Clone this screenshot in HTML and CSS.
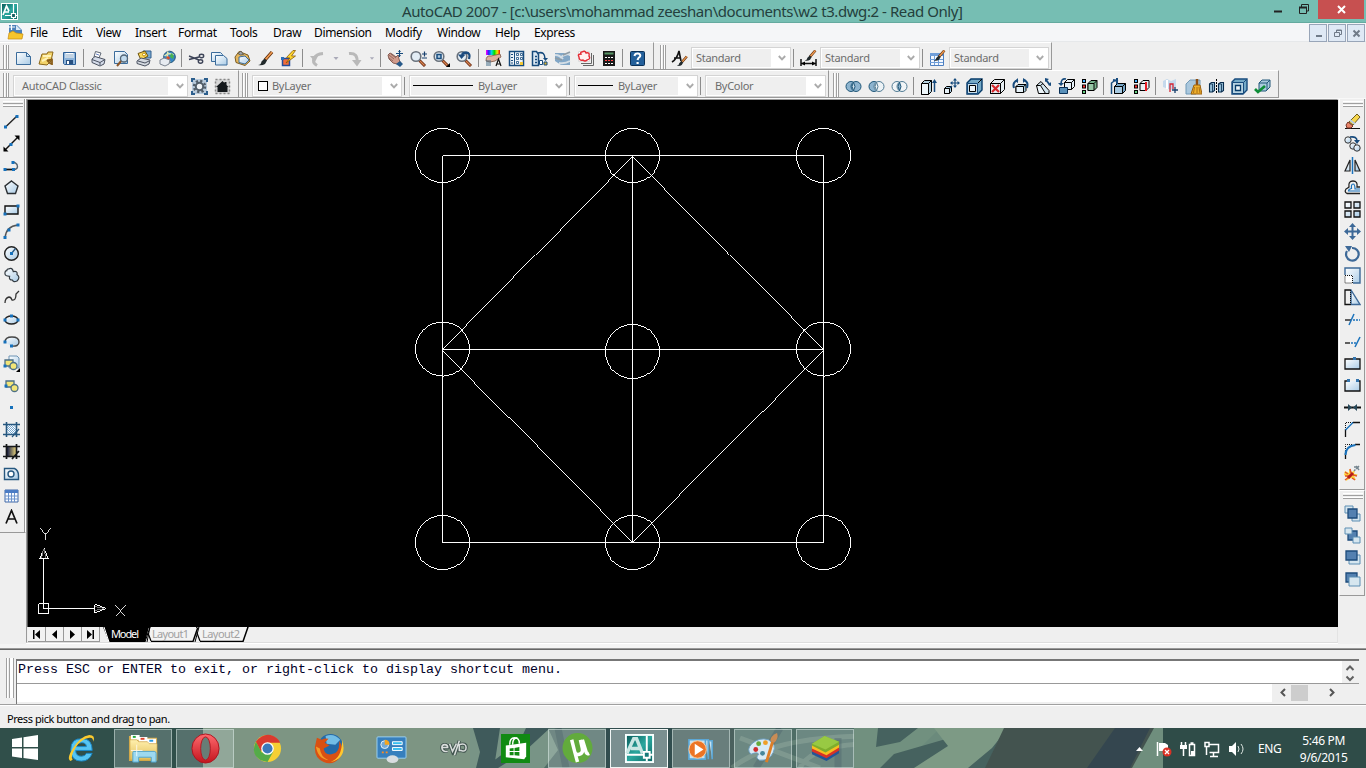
FILE: index.html
```
<!DOCTYPE html>
<html lang="en">
<head>
<meta charset="utf-8">
<title>AutoCAD 2007</title>
<link rel="stylesheet" href="styles.css">
</head>
<body>
<svg class="defs" width="0" height="0">
<defs>
<linearGradient id="sky" x1="0" y1="0" x2="1" y2="1"><stop offset="0" stop-color="#fff"/><stop offset="1" stop-color="#a9cbe6"/></linearGradient>
<linearGradient id="teal" x1="0" y1="0" x2="1" y2="1"><stop offset="0" stop-color="#0c5f5d"/><stop offset=".5" stop-color="#2aa79e"/><stop offset="1" stop-color="#0d6a68"/></linearGradient>
<linearGradient id="gold" x1="0" y1="0" x2="0" y2="1"><stop offset="0" stop-color="#fff0ae"/><stop offset="1" stop-color="#e2bd55"/></linearGradient>
<linearGradient id="red" x1="0" y1="0" x2="0" y2="1"><stop offset="0" stop-color="#ff6a6e"/><stop offset="1" stop-color="#c3141d"/></linearGradient>
<linearGradient id="rainbow"><stop offset="0" stop-color="#f0f"/><stop offset=".2" stop-color="#22f"/><stop offset=".4" stop-color="#0dd"/><stop offset=".6" stop-color="#0d0"/><stop offset=".8" stop-color="#ee0"/><stop offset="1" stop-color="#f00"/></linearGradient>
<linearGradient id="dusk"><stop offset="0" stop-color="#141c44"/><stop offset="1" stop-color="#e6d27c"/></linearGradient>
<symbol id="chev" viewBox="0 0 8 6"><path d="M.8 1 4 4.3 7.200 1" fill="none" stroke="#ababab" stroke-width="1.900"/></symbol>
<symbol id="brush" viewBox="0 0 17 17"><path d="M8 10 15 2" stroke="#5c2a08" stroke-width="3.400"/><path d="M8.500 9.500 15 2" stroke="#f09a50" stroke-width="1.800"/><path d="M1 15q3 0 3.500-3.500L7.500 8.500l2.500 2-2 3.500q-3 2-7 1z" fill="#222a2c"/></symbol>
<symbol id="lens" viewBox="0 0 17 17"><path d="M9.500 10.500 15 16" stroke="#6b2b12" stroke-width="3"/><path d="M10 11l4.500 4.500" stroke="#d9844f" stroke-width="1.200"/><circle cx="6" cy="6.500" r="4.800" fill="#e3edf5" stroke="#69717b" stroke-width="1.600"/></symbol>
<symbol id="frame" viewBox="0 0 17 17"><path d="M3.500 1v15M13.500 1v15M0 3.500h17M0 13.500h17" stroke="#26577f" stroke-width="1.600"/></symbol>
</defs>
</svg>

<header class="title">
<svg class="app" viewBox="0 0 17 17"><path fill="#fff" d="M0 0h17v17H0z"/><path fill="url(#teal)" d="M1 1h15v15H1z"/><path d="M2 12 5.500 3 8 8M3.500 9H8" stroke="#fff" stroke-width="1.700" fill="none"/><path d="M12.500 1v9M12.500 15v1M4 12.500h6M15 12.500h1M10.500 10.500h4v4h-4z" stroke="#fff" fill="#165f61" stroke-width="1.200"/></svg>
<h1>AutoCAD 2007 - [c:\users\mohammad zeeshan\documents\w2 t3.dwg:2 - Read Only]</h1>
<div class="wbtns"><svg width="50" height="20" viewBox="0 0 50 20"><path d="M6 11.500h8" stroke="#222" stroke-width="2"/><path d="M31.500 7.500h7v6h-7zM33.500 7V4.500h7V11H39" stroke="#222" fill="none"/><path d="M31 7.500h8" stroke="#222" stroke-width="2"/></svg><div class="close"><svg width="9" height="9" viewBox="0 0 9 9"><path d="M1 1l7 7M8 1 1 8" stroke="#fff" stroke-width="2"/></svg></div></div>
</header>

<nav class="menubar">
<svg class="doc" viewBox="0 0 17 17"><path d="M2 1h8l5 5v7H2z" fill="#4d82ba"/><path d="M9 1l5 5h-5z" fill="#dceaf6"/><path d="M1 3h7M4.500 0v6" stroke="#fff" stroke-width="1.200"/><path d="M1 15l1-6 4-2 3 2 7 1-1 5z" fill="#f7c52c" stroke="#c78d10" stroke-width=".7"/></svg>
<ul><li>File</li><li>Edit</li><li>View</li><li>Insert</li><li>Format</li><li>Tools</li><li>Draw</li><li>Dimension</li><li>Modify</li><li>Window</li><li>Help</li><li>Express</li></ul>
<div class="mdi">
<span><svg viewBox="0 0 9 9"><path d="M2 7h6" stroke="#707b89" stroke-width="2"/></svg></span>
<span><svg viewBox="0 0 9 9"><path d="M1.500 3.500h5v4h-5zM3.500 3V1h5v4.500H7M3 1.500h6" stroke="#707b89" fill="none"/></svg></span>
<span><svg viewBox="0 0 9 9"><path d="M1.500 1.500l6 6M7.500 1.500l-6 6" stroke="#707b89" stroke-width="2"/></svg></span>
</div>
</nav>

<div class="tbrow">
<div class="tb std"><i class="grip"></i>
<svg class="ic" viewBox="0 0 17 17"><path d="M1.500 2.500h10l4 4v8h-14z" fill="url(#sky)" stroke="#3b6c9c"/><path d="M11.500 2.500v4h4" fill="none" stroke="#3b6c9c"/></svg>
<svg class="ic" viewBox="0 0 17 17"><path d="M1 14 4 4h5l1-2h5l-2 9-4 4z" fill="#f2d36a" stroke="#8b6718"/><path d="M5 6h8M4 11l6-3" stroke="#fff3b8" stroke-width="2"/><path d="M14 15V9.500l-5 1M13 14 9 10" stroke="#8a5d18" stroke-width="1.800" fill="none"/></svg>
<svg class="ic" viewBox="0 0 17 17"><path d="M2.500 2.500h12v12h-11l-1-1z" fill="#8eb4da" stroke="#2e5f96"/><path d="M4.500 3h8v5h-8z" fill="#fff"/><path d="M5 5h7M5 7h7" stroke="#87a7c6"/><path d="M5 10h7v4H5z" fill="#274f7f"/><path d="M6 11h2v3H6z" fill="#fff"/></svg>
<i class="sep"></i>
<svg class="ic" viewBox="0 0 17 17"><path d="M4 7 5.500 1.500 11 3 9 8z" fill="#fff" stroke="#5d6573"/><path d="M6 4l3 1" stroke="#6d86c5"/><path d="M2 9l3-2.500 10 3-1 4.500-4 2-8-3.500z" fill="#d5dcea" stroke="#4a5160"/><path d="M2 9.500l8 3 5-3M10 12.500V15" stroke="#4a5160" fill="none"/></svg>
<svg class="ic" viewBox="0 0 17 17"><path d="M1.500 1.500h10l3 3v9h-13z" fill="url(#sky)" stroke="#3b6c9c"/><path d="M9 10l-5 6" stroke="#8a5528" stroke-width="2"/><circle cx="11" cy="8.500" r="3.500" fill="#c2dbee" stroke="#526475" stroke-width="1.300"/></svg>
<svg class="ic" viewBox="0 0 17 17"><path d="M7 1h8v7H9z" fill="#79a9d2" stroke="#335f8c"/><path d="M2 3.500 9 1l3 5-7 4z" fill="#fbd85a" stroke="#6d5412"/><circle cx="8" cy="4.500" r="1.500" fill="#fff" stroke="#b98a00"/><path d="M1 11l4-3 9 2-1 4-4 2-8-2.500z" fill="#d4d9e0" stroke="#4a5160"/><path d="M2 11l7 2 4-2" stroke="#4a5160" fill="none"/></svg>
<svg class="ic" viewBox="0 0 17 17"><circle cx="10.500" cy="7" r="5.800" fill="#3685c5" stroke="#225275"/><path d="M5.500 6q4-4 9-1M9 1.500q-2 5 2 11" fill="none" stroke="#e0eab4" stroke-width="1.500"/><path d="M12 3q4 2 2 6l-3-2z" fill="#45b251"/><circle cx="9" cy="8" r="1.800" fill="#e24c24"/><path d="M1 10l4-2 6 2-1 4-4 2-5-2z" fill="#e7ebf1" stroke="#7c8491"/></svg>
<i class="sep"></i>
<svg class="ic" viewBox="0 0 17 17"><path d="M1 6l10 4M1 9.500l10-2.500" stroke="#3d4458" stroke-width="1.400"/><ellipse cx="13.500" cy="6" rx="2.200" ry="1.700" fill="none" stroke="#3d4458" stroke-width="1.400"/><ellipse cx="12.500" cy="11.500" rx="2.200" ry="1.700" fill="none" stroke="#3d4458" stroke-width="1.400"/></svg>
<svg class="ic" viewBox="0 0 17 17"><path d="M.500 2.500h9l2 2v7H.500z" fill="url(#sky)" stroke="#3b6c9c"/><path d="M4.500 5.500h8l3.500 3v6.500H4.500z" fill="url(#sky)" stroke="#3b6c9c"/></svg>
<svg class="ic" viewBox="0 0 17 17"><path d="M1 7 5 1.500l9 3.500 2 6-5 4.500-9-3z" fill="#e5b65c" stroke="#7a5b22"/><path d="M4 3.500 7 1l2.500 3.500-3 .5z" fill="#9ca1a8" stroke="#68614d"/><path d="M5 7l6-1 4 4-4 4-6-1.500z" fill="url(#sky)" stroke="#3b6c9c"/></svg>
<svg class="ic" viewBox="0 0 17 17"><use href="#brush"/></svg>
<svg class="ic" viewBox="0 0 17 17"><path d="M2.500 8.500h7v7h-7z" fill="#f16c3c" stroke="#244c9a" stroke-width="1.500"/><path d="M13 .5 6.500 7.500l3.500.5-4 5 9.500-7h-4l4-5.500z" fill="#ffd52e" stroke="#8a5c05" stroke-width=".8"/><path d="M1 7h3v3H1z" fill="#2b6cb8"/></svg>
<i class="sep"></i>
<svg class="ic" viewBox="0 0 17 17"><path d="M8 15.500q-5-3-3-7Q7 4 14 3.500" fill="none" stroke="#b9b9b9" stroke-width="3"/><path d="M1 6l5 6 3-6z" fill="#b9b9b9"/></svg>
<svg class="dd" viewBox="0 0 14 17"><path d="M4.500 7h5L7 10z" fill="#aaaab8"/></svg>
<svg class="ic" viewBox="0 0 17 17"><path d="M3 3.500q9-1 8 9" fill="none" stroke="#b9b9b9" stroke-width="3"/><path d="M6 10l5 6.500 4.500-6.500z" fill="#b9b9b9"/></svg>
<svg class="dd dd2" viewBox="0 0 14 17"><path d="M4.500 7h5L7 10z" fill="#aaaab8"/></svg>
<i class="sep"></i>
<svg class="ic" viewBox="0 0 17 17"><path d="M1 5l2-2 2 1 4 3 2-2 1 4 1 3-3 2-4-1-4-4z" fill="#d19b8c" stroke="#7d5147" stroke-width=".9"/><path d="M2 5l5 4M4 4l5 4M2 8l4 3" stroke="#76534d" stroke-width=".7"/><path d="M9 14l4-3 3 3-3 3z" fill="#275989"/><path d="M12.500 0v7M9 3.500h7" stroke="#174b7d"/><path d="M12.500 0l-1.500 2h3zM12.500 7 11 5h3z" fill="#174b7d"/></svg>
<svg class="ic" viewBox="0 0 17 17"><use href="#lens"/><path d="M12 4h5M14.500 1.500v5M12 8h5" stroke="#173f6d" stroke-width="1.200"/></svg>
<svg class="ic" viewBox="0 0 17 17"><use href="#lens"/><path d="M4 4.500h4v4H4z" fill="#adc8de" stroke="#174b7d" stroke-width="1.500"/><path d="M17 13v4h-4z"/></svg>
<svg class="ic" viewBox="0 0 17 17"><use href="#lens"/><path d="M13 9Q15 3 10 2.500 7 2.500 6 5" stroke="#1c4b7e" stroke-width="2.300" fill="none"/><path d="M2 4.500h7.500L5.500 9z" fill="#1c4b7e"/></svg>
<i class="sep"></i>
<svg class="ic" viewBox="0 0 17 17"><path d="M1 0h14v5H1z" fill="url(#rainbow)"/><path d="M1 11q0-6 5-5l9-2 1 3-6 4-5 1z" fill="#dfb09d" stroke="#785443" stroke-width=".8"/><path d="M1 11h5M1 13h5M1 15h5" stroke="#416a87"/><path d="M11 16l2.500-7L16 16M12 14h3" stroke="#111" stroke-width="1.200" fill="none"/></svg>
<svg class="ic" viewBox="0 0 17 17"><path d="M1.500 1.500h14v14h-14z" fill="#edf3f9" stroke="#174b7d" stroke-width="1.500"/><path d="M6.500 1v15" stroke="#174b7d"/><path d="M3 4.500h2M3 7.500h2M3 10.500h2M3 13h2" stroke="#174b7d"/><path d="M8.500 3.500h2v2h-2zM12.500 3.500h2v2h-2zM8.500 7.500h2v2h-2zM12.500 7.500h2v2h-2zM8.500 11.500h2v2h-2z" fill="#fff" stroke="#174b7d" stroke-width=".8"/><path d="M12 12h3v3h-3z" fill="#f3c735"/></svg>
<svg class="ic" viewBox="0 0 17 17"><path d="M1.500 1.500h4l2 3v11h-6z" fill="#dce9f4" stroke="#174b7d" stroke-width="1.500"/><path d="M4 6.500h2M4 9.500h2M4 12.500h2" stroke="#174b7d" stroke-width="1.500"/><path d="M8.500 10.500h3v4h-3z" fill="#fff" stroke="#174b7d"/><path d="M7 3q7-2 7 6" stroke="#174b7d" stroke-width="1.600" fill="none"/><path d="M12 8h5l-2.500 3z" fill="#174b7d"/><path d="M13 12h3v3h-3z" fill="#ddb430" stroke="#174b7d"/></svg>
<svg class="ic" viewBox="0 0 17 17"><path d="M1 3h9l6 3v9H7L1 11z" fill="#81a6c6"/><path d="M1 5q5 0 8 4M6 8q4-4 10-4M5 13q6 1 11-2" stroke="#d5dee5" stroke-width="1.800" fill="none"/><path d="M9 5l7-3M1 8l7 2" stroke="#8e9ba4" stroke-width="1.500"/></svg>
<svg class="ic" viewBox="0 0 17 17"><path d="M6 15.500h10.500V5M4 13.500h10.500V3" fill="none" stroke="#666"/><path d="M1.500 1.500h11v10h-11z" fill="#fff" stroke="#ddd"/><path d="M5 2q3-2 4 1 4-1 3 3 2 3-2 4-2 2-4 0-4 1-4-3-2-3 2-3-1-2 1-2z" fill="#fff0f0" stroke="#e52b35" stroke-width="1.400"/></svg>
<svg class="ic" viewBox="0 0 17 17"><path d="M3 1h12v15H3z" fill="#191919"/><path d="M4.500 2.500h9v2h-9z" fill="#579564"/><path d="M5 7h2v1H5zm3 0h2v1H8zm3 0h2v1h-2zM5 13h2v1H5zm3 0h2v1H8zm3 0h2v1h-2z" fill="#fff"/><path d="M5 10h2v1H5zm3 0h2v1H8zm3 0h2v1h-2z" fill="#f44"/></svg>
<i class="sep"></i>
<svg class="ic" viewBox="0 0 17 17"><rect x="1.500" y="1.500" width="14" height="14" rx="1" fill="#24609b" stroke="#0b3158"/><path d="M5.500 6q.5-3 3.500-2.500 3 .5 2 3-2 1.500-2.500 3.500" fill="none" stroke="#fff" stroke-width="2.100"/><path d="M7.500 12h2.200v2H7.500z" fill="#fff"/></svg>
</div>
<div class="tb styles"><i class="grip"></i>
<svg class="ic" viewBox="0 0 17 17"><path d="M1 12Q6 9 8 1l2 10M3 8h7" stroke="#111" stroke-width="1.600" fill="none"/><g transform="translate(5 5) scale(.72)"><use href="#brush" width="17" height="17"/></g></svg>
<div class="combo w100"><span>Standard</span><svg><use href="#chev"/></svg></div><i class="sep"></i>
<svg class="ic" viewBox="0 0 17 17"><path d="M1 9v7M16 9v7M1 13.500h15" stroke="#111" stroke-width="1.500"/><path d="M1 13.500l4-2v4zM16 13.500l-4-2v4z"/><g transform="translate(4 -1) scale(.76)"><use href="#brush" width="17" height="17"/></g></svg>
<div class="combo w100"><span>Standard</span><svg><use href="#chev"/></svg></div><i class="sep"></i>
<svg class="ic" viewBox="0 0 17 17"><path d="M1.500 3.500h13v12h-13z" fill="#f3f8ff" stroke="#4c7ec0"/><path d="M1 3h13v3H1z" fill="#6f9ed9"/><path d="M5.500 4v11M9.500 4v11M1 9.500h13M1 12.500h13" stroke="#6f9ed9"/><g transform="translate(4 -1) scale(.76)"><use href="#brush" width="17" height="17"/></g></svg>
<div class="combo w100"><span>Standard</span><svg><use href="#chev"/></svg></div>
</div>
</div>

<div class="tbrow second">
<div class="tb wsp"><i class="grip"></i>
<div class="combo w175"><span>AutoCAD Classic</span><svg><use href="#chev"/></svg></div>
<svg class="ic" viewBox="0 0 17 17"><path d="M1 1h15v15H1z" fill="#b9cbdc"/><path d="M1 4V1h3M13 1h3v3M16 13v3h-3M4 16H1v-3" fill="none" stroke="#2d5f8d" stroke-width="2"/><circle cx="8.500" cy="8.500" r="5.500" fill="none" stroke="#525e69" stroke-width="2.500" stroke-dasharray="2.200 2.120"/><circle cx="8.500" cy="8.500" r="3.700" fill="#eef2f5" stroke="#525e69" stroke-width="2"/></svg>
<svg class="ic" viewBox="0 0 17 17"><path d="M1 1h15v15H1z" fill="#d8d8d8"/><path d="M1.500 1.500h14v14h-14z" fill="none" stroke="#888" stroke-width="1.500" stroke-dasharray="2 2"/><path d="M2 9 8.500 3l2 2V4h2v3l2 2h-1v5h-10V9z" fill="#15191c"/></svg>
</div>
<div class="tb props"><i class="grip"></i>
<div class="combo w150"><b class="swatch"></b><span>ByLayer</span><svg><use href="#chev"/></svg></div><i class="sep"></i>
<div class="combo w158"><b class="ln l60"></b><span>ByLayer</span><svg><use href="#chev"/></svg></div><i class="sep"></i>
<div class="combo w124"><b class="ln l35"></b><span>ByLayer</span><svg><use href="#chev"/></svg></div><i class="sep"></i>
<div class="combo w120"><span class="ind">ByColor</span><svg><use href="#chev"/></svg></div>
</div>
<div class="tb model"><i class="grip"></i>
<svg class="ic" viewBox="0 0 17 17"><circle cx="6" cy="8.500" r="5" fill="#8db4cf" stroke="#205779"/><circle cx="11" cy="8.500" r="5" fill="#8db4cf" stroke="#205779"/><path d="M8.500 4.200q-3 4 0 8.600 3-4 0-8.600z" fill="#cde0ec" stroke="#205779"/></svg>
<svg class="ic" viewBox="0 0 17 17"><circle cx="6" cy="8.500" r="5" fill="#8db4cf" stroke="#205779"/><circle cx="11" cy="8.500" r="5" fill="#edf3f6" stroke="#517b94"/><path d="M8.500 4.200q-3 4 0 8.600 3-4 0-8.600z" fill="#edf3f6" stroke="#517b94"/></svg>
<svg class="ic" viewBox="0 0 17 17"><circle cx="6" cy="8.500" r="5" fill="#f1f5f7" stroke="#517b94"/><circle cx="11" cy="8.500" r="5" fill="#f1f5f7" stroke="#517b94"/><path d="M8.500 4.200q-3 4 0 8.600 3-4 0-8.600z" fill="#8db4cf" stroke="#205779"/></svg>
<i class="sep"></i>
<svg class="ic" viewBox="0 0 17 17"><path d="M1.500 5.500l3-3h7v11l-3 3h-7z" fill="#b5d3e2" stroke="#000"/><path d="M1.500 5.500h7v11h-7zM8.500 5.500l3-3" fill="#edf6fa" stroke="#000"/><path d="M14.500 4v10" stroke="#174b7d" stroke-width="1.500"/><path d="M12 5l2.500-4L17 5z" fill="#174b7d"/></svg>
<svg class="ic" viewBox="0 0 17 17"><path d="M1.500 10.500l2-2h5v5l-2 2h-5z" fill="#a9cbe0" stroke="#000"/><path d="M1.500 10.500h5v5h-5zM6.500 10.500l2-2" fill="#e6f1f8" stroke="#000"/><path d="M12 1v8M8 5h8M7 10l2-2" stroke="#174b7d" stroke-width="1.200"/><path d="M12 0l-2 2.500h4zM12 10l-2-2.500h4zM7 5l2.500-2v4zM17 5l-2.500-2v4z" fill="#174b7d"/></svg>
<svg class="ic" viewBox="0 0 17 17"><path d="M1 5l4-4h11v11l-4 4H1z" fill="#75aac7" stroke="#063b69" stroke-width="1.400"/><path d="M1.500 5.500h10v10h-10z" fill="#c9dfeb" stroke="#174b7d"/><path d="M3.500 7.500h6v6h-6z" fill="#e9f4fa" stroke="#000"/><path d="M12 5l4-4" stroke="#000"/></svg>
<svg class="ic" viewBox="0 0 17 17"><path d="M1.500 5.500l4-4h10v10l-4 4h-10z" fill="#e6eef2" stroke="#000"/><path d="M1.500 5.500h10v10h-10zM11.500 5.500l4-4" fill="none" stroke="#000"/><path d="M3 7l7 7M10 7l-7 7" stroke="#d5262b" stroke-width="2.200"/></svg>
<svg class="ic" viewBox="0 0 17 17"><path d="M4 8.500l2-2h8v6l-2 2H4z" fill="#a9cbe0" stroke="#000"/><path d="M4 8.500h7.500v6H4zM11.500 8.500l2.500-2" fill="#e6f1f8" stroke="#000"/><path d="M6 2Q0 4 2 10M11 2q6 1 4 8" fill="none" stroke="#174b7d" stroke-width="2"/><path d="M6 0v5L3 3zM11 0v5l3-3z" fill="#174b7d"/></svg>
<svg class="ic" viewBox="0 0 17 17"><path d="M1.500 7.500 6 3.500l8 9v3H7z" fill="#d2e4ee" stroke="#000"/><path d="M1.500 7.500h4l5 8h-7zM5.500 7.500 8 5.500" fill="#edf5f9" stroke="#000"/><path d="M11 2l4 5" stroke="#174b7d" stroke-width="2"/><path d="M10 4V0l4 1zM16 8V4l-3 3z" fill="#174b7d"/></svg>
<svg class="ic" viewBox="0 0 17 17"><path d="M6.500 4.500l3-3h7v7l-3 3h-7z" fill="#e6f1f8" stroke="#000"/><path d="M6.500 4.500h7v7M13.500 4.500l3-3" fill="none" stroke="#000"/><path d="M1.500 9.500h8v6h-8z" fill="#5990b9" stroke="#082f56"/><path d="M8 1Q3 0 3 6" stroke="#174b7d" stroke-width="1.600" fill="none"/><path d="M0 5h6L3 8z" fill="#174b7d"/></svg>
<svg class="ic" viewBox="0 0 17 17"><path d="M1 1h4v4H1zM1 6.500h4v4H1zM1 12h4v4H1z"/><path d="M2 2h2v2H2z" fill="#46b0ff"/><path d="M2 7.500h2v2H2z" fill="#f33"/><path d="M2 13h2v2H2z" fill="#62cf80"/><path d="M7 5.500l3-3h6v7l-3 3H7z" fill="#76b18b" stroke="#000"/><path d="M7 5.500h6v7H7zM13 5.500l3-3" fill="#97c7a6" stroke="#000"/></svg>
<i class="sep"></i>
<svg class="ic" viewBox="0 0 17 17"><path d="M4.500 8.500l3-3h8v7l-3 3h-8z" fill="#75a5c6" stroke="#000"/><path d="M4.500 8.500h8v7h-8zM12.500 8.500l3-3" fill="#a8cae1" stroke="#000"/><path d="M1.500 16V5l4-3" fill="none" stroke="#174b7d" stroke-width="1.500"/><path d="M7 0v6M3 2l5 1" stroke="#174b7d" stroke-width="2"/></svg>
<svg class="ic" viewBox="0 0 17 17"><path d="M1 1h4v4H1zM1 6.500h4v4H1zM1 12h4v4H1z"/><path d="M2 2h2v2H2z" fill="#46b0ff"/><path d="M2 7.500h2v2H2z" fill="#f33"/><path d="M2 13h2v2H2z" fill="#62cf80"/><path d="M7 5.500l3-3h6v7l-3 3H7z" fill="#e8f1f5" stroke="#000"/><path d="M7 5.500h6v7" fill="none" stroke="#000"/><path d="M13 4v9" stroke="#e81b24" stroke-width="2"/></svg>
<i class="sep"></i>
<svg class="ic" viewBox="0 0 17 17"><path d="M1 3l4-2 4 2 5-2v8l-5 3-8-3z" fill="#c5d9ec"/><path d="M5 2v9" stroke="#fff" stroke-width="2"/><path d="M8 14V6h3v5" stroke="#d42533" stroke-width="1.300" fill="none"/><path d="M10 12h6M13 9v6" stroke="#173f6d" stroke-width="1.300"/></svg>
<svg class="ic" viewBox="0 0 17 17"><path d="M1 6l4-4h10v10l-4 4H1z" fill="#a9c7dd" stroke="#719ab8"/><path d="M12 1v6" stroke="#8c4d13" stroke-width="2.500"/><path d="M9 7h6l2 9H6z" fill="#efb02c" stroke="#9b6110"/><path d="M9.500 9l-1 6M12 9v6M14 9l1 6" stroke="#9b6110" stroke-width=".8"/></svg>
<svg class="ic" viewBox="0 0 17 17"><path d="M1.500 6l2-1.500h3v8l-2 1.500h-3zM10.500 6l2-1.500h3v8l-2 1.500h-3z" fill="#94bdd7" stroke="#082c4d" stroke-width="1.100"/><path d="M1.500 6h3v8M10.500 6h3v8" fill="none" stroke="#082c4d" stroke-width=".8"/><path d="M8.500 1v15" stroke="#000" stroke-dasharray="2 1"/></svg>
<svg class="ic" viewBox="0 0 17 17"><path d="M1 4l3-3h12v11l-4 4H1z" fill="#75aac7" stroke="#174b7d" stroke-width="1.400"/><path d="M1.500 4.500h11v11h-11zM12.500 4.500l3-3" fill="#b7d3e2" stroke="#174b7d"/><path d="M4.500 7.500h5v5h-5z" fill="#edf6fa" stroke="#063b69" stroke-width="1.300"/></svg>
<svg class="ic" viewBox="0 0 17 17"><path d="M5 5l3-3h8v7l-4 4H5z" fill="#a9cbdd" stroke="#205779"/><path d="M5 5h8v7M13 5l3-3" fill="none" stroke="#205779"/><path d="M1 11l3 3 7-6" fill="none" stroke="#0e8d38" stroke-width="2.700"/></svg>
</div>
</div>

<main class="work">
<aside class="side left"><i class="hgrip"></i>
<svg class="ic" viewBox="0 0 17 17"><path d="M2.500 14 14 3" stroke="#222" stroke-width="1.400"/><path d="M1 12.500h3v3H1zM12.500 2h3v3h-3z" fill="#1671bb"/></svg>
<svg class="ic" viewBox="0 0 17 17"><path d="M2 15 15 2" stroke="#111" stroke-width="1.500"/><path d="M.5 16.500v-5l5 5zM16.500.5v5l-5-5z"/><path d="M6.500 8h3v3h-3z" fill="#1671bb"/></svg>
<svg class="ic" viewBox="0 0 17 17"><path d="M2 12.500h8q6 0 4-5-2-3-5-2" fill="none" stroke="#53616c" stroke-width="1.400"/><path d="M2 12.500h8" stroke="#111" stroke-width="1.500"/><path d="M.5 11h3v3h-3zM9 11h3v3H9zM8.500 4h3v3h-3z" fill="#1671bb"/></svg>
<svg class="ic" viewBox="0 0 17 17"><path d="M8.500 2 15 7l-2.500 7.500h-8L2 7z" fill="url(#sky)" stroke="#2b2f33" stroke-width="1.400"/></svg>
<svg class="ic" viewBox="0 0 17 17"><path d="M2 5h13v8H2z" fill="url(#sky)" stroke="#111" stroke-width="1.400"/><path d="M.5 11.500h3v3h-3zM13.500 3.500h3v3h-3z" fill="#1671bb"/></svg>
<svg class="ic" viewBox="0 0 17 17"><path d="M2 15Q3 3 15 2" fill="none" stroke="#555" stroke-width="1.400"/><path d="M.5 13h3v3h-3zM4.500 5.500h3v3h-3zM13.500.5h3v3h-3z" fill="#1671bb"/></svg>
<svg class="ic" viewBox="0 0 17 17"><circle cx="8.500" cy="8.500" r="6.800" fill="url(#sky)" stroke="#222" stroke-width="1.400"/><path d="M8.500 8.500l4-5" stroke="#26577f" stroke-width="1.300"/><path d="M7 7h3v3H7z" fill="#1671bb"/></svg>
<svg class="ic" viewBox="0 0 17 17"><path d="M5 2q4-2 5 3 5-1 4 3 4 3 0 7-4 2-5-1-4 0-3-4-5 0-5-3 0-3 2-3 0-2 2-2z" transform="translate(1 0) scale(.93)" fill="url(#sky)" stroke="#333b42" stroke-width="1.300"/></svg>
<svg class="ic" viewBox="0 0 17 17"><path d="M2 14q0-5 4-6 2 0 3 3 4 1 4-6l3-3" fill="none" stroke="#333" stroke-width="1.300"/></svg>
<svg class="ic" viewBox="0 0 17 17"><ellipse cx="8.500" cy="9" rx="6.500" ry="4" fill="url(#sky)" stroke="#222" stroke-width="1.400"/><path d="M.5 7.500h3v3h-3zM13.500 7.500h3v3h-3zM7 3.500h3v3H7z" fill="#1671bb"/></svg>
<svg class="ic" viewBox="0 0 17 17"><path d="M2 9q0-5 7-5t7 5-8 4" fill="url(#sky)" stroke="#444" stroke-width="1.400"/><path d="M.5 7.500h3v3h-3zM7 11.500h3v3H7z" fill="#1671bb"/></svg>
<svg class="ic" viewBox="0 0 17 17"><path d="M6 1h8l2 2v10H6z" fill="url(#sky)" stroke="#6d93b4"/><path d="M2 5h8v6H2z" fill="#f2e577" stroke="#4c6f85" stroke-width="1.300"/><circle cx="10.500" cy="11" r="3.500" fill="#f2e577" stroke="#4c6f85" stroke-width="1.300"/><path d="M.5 9.500h3v3h-3z" fill="#1671bb"/><path d="M17 13v4h-4z"/></svg>
<svg class="ic" viewBox="0 0 17 17"><path d="M3 4h8v6H3z" fill="#f2e577" stroke="#4c6f85" stroke-width="1.300"/><circle cx="11.500" cy="11" r="3.500" fill="#f2e577" stroke="#4c6f85" stroke-width="1.300"/><path d="M1.500 7.500h3v3h-3z" fill="#1671bb"/></svg>
<svg class="ic" viewBox="0 0 17 17"><path d="M7 7h3v3H7z" fill="#1671bb"/></svg>
<svg class="ic" viewBox="0 0 17 17"><path d="M4 4h9v9H4z" fill="#fff"/><path d="M4 4l9 9M4 8l5 5M8 4l5 5M4 10.500 6.500 13M10.500 4 13 6.500M4 6l7 7M6 4l7 7" stroke="#3d84be" stroke-width=".7"/><use href="#frame"/><path d="M9 16l7-8" stroke="#26577f" stroke-width="1.200"/></svg>
<svg class="ic" viewBox="0 0 17 17"><path d="M4 4h9v9H4z" fill="url(#dusk)"/><path d="M3.500 1v15M13.500 1v15M0 3.500h17M0 13.500h17M9 16l7-8" stroke="#151719" stroke-width="1.700"/></svg>
<svg class="ic" viewBox="0 0 17 17"><path d="M1.500 3.500h10q4 2 4 7v4h-14z" fill="url(#sky)" stroke="#26577f" stroke-width="1.400"/><circle cx="8" cy="9" r="3" fill="#fff" stroke="#26577f" stroke-width="1.400"/></svg>
<svg class="ic" viewBox="0 0 17 17"><path d="M2 3h13v12H2z" fill="#f8fbff" stroke="#4169a7"/><path d="M2 3h13v3H2z" fill="#4b7cc5"/><path d="M5.500 6v9M8.500 6v9M11.500 6v9M2 9h13M2 12h13" stroke="#6b92cc"/></svg>
<svg class="ic" viewBox="0 0 17 17"><path d="M3 14.500 8.500 1.500 14 14.500M5 10h7" fill="none" stroke="#111" stroke-width="1.700"/></svg>
</aside>

<section class="view">
<svg class="canvas" viewBox="28 100 1310 527" shape-rendering="crispEdges">
<g fill="none" stroke="#fff" stroke-width=".99">
<path d="M442.500 155.500h381v387h-381zM632.500 155v387M442 349.500h381"/>
<path d="M632.500 155.500l191 194-191 193-190-193z"/>
<circle cx="442.500" cy="155.500" r="27"/><circle cx="632.500" cy="155.500" r="27"/><circle cx="823.500" cy="155.500" r="27"/>
<circle cx="442.500" cy="349" r="27"/><circle cx="632.500" cy="351.500" r="27"/><circle cx="823.500" cy="349" r="27"/>
<circle cx="442.500" cy="542.500" r="27"/><circle cx="632.500" cy="542.500" r="27"/><circle cx="823.500" cy="542.500" r="27"/>
<path d="M38.500 603.500h10v10h-10zM43.500 609V558M43 608.500h52M39.500 558.500h9l-4.500-11zM94.500 604.500v8l11-4z"/>
<path d="M41.500 558l2-9M45.500 558l-1-9M95 606.500l9 2M95 610.500l9-2" stroke="#777"/>
<path d="M40.500 527.500l5 6 5-6M45.500 533v7M115.500 604.500l10 11M125.500 604.500l-10 11" stroke="#ddd"/>
</g>
</svg>
<div class="tabs">
<span class="nb"><svg viewBox="0 0 9 9"><path d="M1 0h1.500v9H1zM8 0v9L3 4.500z"/></svg></span>
<span class="nb"><svg viewBox="0 0 9 9"><path d="M7 0v9L2 4.500z"/></svg></span>
<span class="nb"><svg viewBox="0 0 9 9"><path d="M2 0v9l5-4.500z"/></svg></span>
<span class="nb"><svg viewBox="0 0 9 9"><path d="M1 0v9l5-4.500zM6.500 0H8v9H6.500z"/></svg></span>
<svg class="tabset" viewBox="100 627 150 15"><path d="M196 627h52l-5 14.500h-43" fill="#f3f3f3" stroke="#000" stroke-width="1.500"/><path d="M147 627h51l-5 14.500h-42" fill="#f3f3f3" stroke="#000" stroke-width="1.500"/><path d="M197 626.500h50M150 626.500h46" stroke="#f3f3f3" stroke-width="3"/><path d="M145 627h5l-3 15M196 627h3l-4 15M145 642l5-15" stroke="#000" fill="none"/><path d="M103 627h46l-4 15h-36z"/><path d="M104 627l5 15" stroke="#fff" fill="none"/><path d="M148 633l3 8M197 633l3 8" stroke="#000" stroke-width="1.200"/><text x="111" y="638" textLength="28">Model</text><text x="152" y="638" textLength="37">Layout1</text><text x="202" y="638" textLength="38">Layout2</text></svg>
</div>
</section>

<aside class="rightcol">
<div class="side right"><i class="hgrip"></i>
<svg class="ic" viewBox="0 0 17 17"><path d="M1 15.500h15" stroke="#111"/><path d="M5 9 13 1l3 3-7 8z" fill="#f6d64c" stroke="#6e5b1d"/><path d="M4 9l5 4-2 2H3l-1-3z" fill="#e98368" stroke="#743325"/><path d="M6 7l5 4" stroke="#b8cfe0" stroke-width="2"/></svg>
<svg class="ic" viewBox="0 0 17 17"><circle cx="4" cy="5" r="3.200" fill="url(#sky)" stroke="#333"/><circle cx="9" cy="11" r="3.200" fill="url(#sky)" stroke="#333"/><circle cx="13" cy="13" r="3.200" fill="url(#sky)" stroke="#333"/><path d="M6 2q7-1 7 4" fill="none" stroke="#174b7d" stroke-width="1.600"/><path d="M10 5h6l-3 4z" fill="#174b7d"/></svg>
<svg class="ic" viewBox="0 0 17 17"><path d="M6 3v11H1zM11 3v11h5z" fill="url(#sky)" stroke="#222" stroke-width="1.200"/><path d="M8.500 0v17" stroke="#1b73bc" stroke-width="1.500"/></svg>
<svg class="ic" viewBox="0 0 17 17"><path d="M16 14.500H3Q0 13 2 10q2-1 3-2Q4 2 9 2t4 6h3" fill="none" stroke="#222" stroke-width="1.300"/><path d="M16 12H4.500q0-2 3-2.500Q7 5 9 5t2 5h5" fill="none" stroke="#1b73bc" stroke-width="1.200"/></svg>
<svg class="ic" viewBox="0 0 17 17"><path d="M1 1h6v6H1zM10 1h6v6h-6zM1 10h6v6H1zM10 10h6v6h-6z" fill="url(#sky)" stroke="#111" stroke-width="1.300"/></svg>
<svg class="ic" viewBox="0 0 17 17"><path d="M8.500 2v13M2 8.500h13" stroke="#3d6998" stroke-width="2"/><path d="M8.500 0 5 4h7zM8.500 17 5 13h7zM0 8.500 4 5v7zM17 8.500 13 5v7z" fill="#3d6998"/></svg>
<svg class="ic" viewBox="0 0 17 17"><path d="M8 3a6.300 6.300 0 1 1-5 3" fill="none" stroke="#3d6998" stroke-width="2.200"/><path d="M1 1h7l-3 6z" fill="#3d6998"/></svg>
<svg class="ic" viewBox="0 0 17 17"><path d="M1 1h15v15H1z" fill="url(#sky)"/><path d="M1 8V1h15v15H9" fill="none" stroke="#3d6998" stroke-width="1.400"/><path d="M1 8.500h7.500V16H1z" fill="#fff" stroke="#111" stroke-dasharray="1 1"/></svg>
<svg class="ic" viewBox="0 0 17 17"><path d="M7 1l9 14.500H7z" fill="url(#sky)" stroke="#3d6998" stroke-width="1.400"/><path d="M6.500 1H1v14.500h5.500" fill="none" stroke="#111" stroke-width="1.300"/><path d="M6.500 1v15" stroke="#111" stroke-dasharray="1 1"/></svg>
<svg class="ic" viewBox="0 0 17 17"><path d="M1 9h6" stroke="#111" stroke-width="1.300"/><path d="M9 9h7" stroke="#1b73bc" stroke-width="1.300" stroke-dasharray="2 1"/><path d="M5 14l5-11" stroke="#1b73bc" stroke-width="1.500"/></svg>
<svg class="ic" viewBox="0 0 17 17"><path d="M1 10h5" stroke="#111" stroke-width="1.300"/><path d="M7 10h6" stroke="#1b73bc" stroke-width="1.300" stroke-dasharray="2 1"/><path d="M11 14l5-10" stroke="#1b73bc" stroke-width="1.500"/></svg>
<svg class="ic" viewBox="0 0 17 17"><path d="M1 4h15v10H1z" fill="url(#sky)" stroke="#111" stroke-width="1.300"/><path d="M9 2h3v3H9z" fill="#3475ae"/></svg>
<svg class="ic" viewBox="0 0 17 17"><path d="M1 4h15v10H1z" fill="url(#sky)"/><path d="M3 4H1v10h15V4h-2" fill="none" stroke="#111" stroke-width="1.300"/><path d="M3 2h3v3H3zM12 2h3v3h-3z" fill="#3475ae"/></svg>
<svg class="ic" viewBox="0 0 17 17"><path d="M0 8.500h17" stroke="#111" stroke-width="2"/><path d="M4 5l4 3.500L4 12zM13 5 9 8.500l4 3.500z" fill="#264758"/></svg>
<svg class="ic" viewBox="0 0 17 17"><path d="M1.500 16V8M9 1.500h7" stroke="#111" stroke-width="1.300"/><path d="M1.500 7V1.500H9" fill="none" stroke="#111" stroke-dasharray="1 1"/><path d="M1.500 9 9 1.500" stroke="#1b73bc" stroke-width="1.500"/></svg>
<svg class="ic" viewBox="0 0 17 17"><path d="M1.500 16v-6M11 1.500h5" stroke="#111" stroke-width="1.300"/><path d="M1.500 8V1.500H9" fill="none" stroke="#111" stroke-dasharray="1 1"/><path d="M1.500 12q0-9 10-10" fill="none" stroke="#1b73bc" stroke-width="2"/></svg>
<svg class="ic" viewBox="0 0 17 17"><path d="M1 6l4 2V4l3 3 3-2-1 4h4l-4 2 2 4-5-2-5 3 1-4-3-2z" fill="#ffd33b"/><path d="M1 7l3 2M6 4l1 4M1 15l4-3M8 13l3 2M1 11l4 0M9 10l4 1" stroke="#e0572b" stroke-width="1.500"/><path d="M4 13 9 8" stroke="#b51c1c" stroke-width="3"/><path d="M10 6l5-5M10 2h6M15 5l-3-4" stroke="#75858f" stroke-width="1.500" stroke-dasharray="2 1"/></svg>
</div>
<div class="side right order"><i class="hgrip"></i>
<svg class="ic" viewBox="0 0 17 17"><path d="M1 1h8v7H1zM8 9h8v7H8z" fill="#d6e6ef" stroke="#5c8eb3"/><path d="M4 4h9v9H4z" fill="#5380b0" stroke="#1d4b7b" stroke-width="1.300"/></svg>
<svg class="ic" viewBox="0 0 17 17"><path d="M4 4h9v9H4z" fill="#5380b0" stroke="#1d4b7b" stroke-width="1.300"/><path d="M1 1h7v6H1zM9 10h7v6H9z" fill="#d6e6ef" stroke="#5c8eb3"/></svg>
<svg class="ic" viewBox="0 0 17 17"><path d="M5 6h11v9H5z" fill="#d6e6ef" stroke="#5c8eb3"/><path d="M2 2h11v9H2z" fill="#5380b0" stroke="#1d4b7b" stroke-width="1.300"/></svg>
<svg class="ic" viewBox="0 0 17 17"><path d="M2 2h11v9H2z" fill="#5380b0" stroke="#1d4b7b" stroke-width="1.300"/><path d="M5 6h11v9H5z" fill="#d6e6ef" stroke="#5c8eb3"/></svg>
</div>
</aside>
</main>

<section class="cmd">
<i class="grip"></i>
<div class="cmdbox">
<div class="hist"><p>Press ESC or ENTER to exit, or right-click to display shortcut menu.</p><div class="vs"><svg viewBox="0 0 16 22"><path d="M4.500 9 8 5.500 11.500 9M4.500 15.500 8 19l3.500-3.500" fill="none" stroke="#606060" stroke-width="2"/></svg></div></div>
<div class="inp"><div class="field"></div><div class="hs"><svg viewBox="0 0 69 18"><path d="M19 1h17v16H19z" fill="#cdcdcd"/><path d="M13 5 9.500 8.500 13 12M58 5l3.500 3.500L58 12" fill="none" stroke="#555" stroke-width="2"/></svg></div></div>
</div>
</section>

<div class="status">Press pick button and drag to pan.</div>

<footer class="taskbar">
<svg class="wall" viewBox="0 0 1366 40" preserveAspectRatio="none">
<path fill="#6b8a7c" d="M0 0h1366v40H0z"/>
<path fill="#304f4a" d="M0 0h203v40H0z"/><path fill="#7d9583" d="M203 0h290v40H203z"/><path fill="#789486" d="M470 0h400v40H470z"/>
<path fill="#3f5a5b" d="M473 0h27l-6 40h-18l4-16zM526 0h24l-26 24-26 16h-14l36-27z"/><path fill="#526e68" d="M548 0h60v40h-64l14-18z"/><path fill="#314d4e" d="M606 0h66v40h-66z"/><path fill="#4a615e" d="M672 0h62v40h-62z"/><path fill="#4e6d66" d="M734 0h140v40H734z"/>
<path d="M732 40q40-32 140-32M740 10l80 30M800 40q12-24 70-24" stroke="#86a391" stroke-width="5" fill="none" opacity=".4"/><path d="M558 0l8 40M780 0l-24 40M838 10v30" stroke="#263f48" stroke-width="7" fill="none" opacity=".4"/>
<path fill="#71907f" d="M854 0h86l-40 40h-46z"/><path fill="#46625f" d="M878 0h40l-18 14-24 5zM894 26l90-26h20l-18 40H880z"/><path fill="#7d9a85" d="M934 0h74l-16 20-24 20h-54l34-22z"/><path fill="#43534f" d="M1004 0h151l-22 40H985z"/><path fill="#34464f" d="M1115 0h35l-20 40h-43z"/><path fill="#6f8e7d" d="M1154 0h9v40h-31z"/><path fill="#2f4c48" d="M1163 0h203v40h-203z"/>
</svg>
<div class="start"><svg width="28" height="26" viewBox="0 0 28 26"><path fill="#fff" d="M1 4l10-1.500V12H1zM12.500 2.300 27 0v12H12.500zM1 13.500h10V23L1 21.500zM12.500 13.500H27V25l-14.500-2z"/></svg></div>
<div class="apps">
<span><svg viewBox="0 0 32 32"><path d="M27 18H10q0 6 6 6 4 0 5-3h6q-3 8-11 8Q5 29 5 17T17 6q10 0 10 12zM10 14h11q0-4-5-4t-6 4z" fill="#55c4f2" stroke="#1a87c6"/><path d="M5 29q-5-2 2-13Q15 3 24 2q7 0 4 7 0-5-4-4-8 1-14 10-6 10-3 12z" fill="#fbcb2f"/></svg></span>
<span class="on"><svg viewBox="0 0 32 32"><path d="M1 6V3h9l2 2h18v24H1z" fill="#d6ac4c"/><path d="M3 2h9v5H3zM11 4h9v5h-9zM20 6h9v5h-9z" fill="#fff"/><path d="M5 3h3v2H5z" fill="#22a639"/><path d="M13 5h4v2h-4z" fill="#df442c"/><path d="M22 7h4v2h-4z" fill="#2a99df"/><path d="M2 7h7l2 2h9l2 2h8v17H2z" fill="url(#gold)" stroke="#c59b3e" stroke-width=".6"/><path d="M5 30V20q0-1 1-1h21q2 0 2 2v9h-5v-5H11v5z" fill="#9dd9ef" stroke="#51a4cc"/><path d="M9 12v12M3 18h12" stroke="#fff" opacity=".8"/></svg></span>
<span class="on"><svg viewBox="0 0 32 32"><ellipse cx="16" cy="16" rx="14" ry="15" fill="url(#red)" stroke="#a91620"/><ellipse cx="16" cy="16" rx="5" ry="12" fill="#687d76" stroke="#b31a23"/></svg></span>
<span><svg viewBox="0 0 32 32"><circle cx="16" cy="16" r="14" fill="#f5cf34"/><path d="M4 9Q12-1 22 3q6 3 7 7H16L9 19z" fill="#d93a2f"/><path d="M4 9q-6 13 5 19l7 2 6-11-12 1z" fill="#54ab49"/><circle cx="16" cy="16" r="6.500" fill="#fff"/><circle cx="16" cy="16" r="5.200" fill="#3c79bb"/></svg></span>
<span><svg viewBox="0 0 32 32"><circle cx="17" cy="14" r="13" fill="#246aa8"/><path d="M12 3q9-3 15 4l-5 5-9-1z" fill="#72bde6"/><path d="M3 5l5 2q3-2 7-1l-4 4 5 3-6 3q1 7 8 6 9-1 8-14 6 9 1 17-7 9-17 5Q0 26 1 14z" fill="#d95013"/><path d="M29 7q6 19-12 23 12-4 12-23" fill="#ffc72e"/><path d="M2 14q2 13 13 14-8-3-9-12" fill="#f49a27"/></svg></span>
<span><svg viewBox="0 0 32 32"><rect x="1" y="4" width="30" height="22" rx="1" fill="#377fbd" stroke="#9ad1f2"/><circle cx="9" cy="12" r="4" fill="#73aad8" stroke="#e5f0f7"/><path d="M9 12V7q5 0 5 5z" fill="#f5a51e"/><path d="M17 9h10v3H17zM17 15h10v3H17z" fill="#36bdf0" stroke="#fff"/><path d="M6 19h2v2H6zM10 19h2v2h-2z" fill="#ff8b20"/><ellipse cx="17" cy="27" rx="6" ry="4" fill="#d9dde0"/></svg></span>
<span><svg viewBox="0 0 32 32"><path d="M4 15h6q0-3-3-3t-3 3 3 4h3M12 11l3 8 4-8M17 23l5-15M22 18v-6q7-2 7 3t-5 3z" fill="none" stroke="#40534e" stroke-width="3.500"/><path d="M4 15h6q0-3-3-3t-3 3 3 4h3M12 11l3 8 4-8M17 23l5-15M22 18v-6q7-2 7 3t-5 3z" fill="none" stroke="#d9dddb" stroke-width="1.600"/></svg></span>
<span><svg viewBox="0 0 32 32"><path fill="#118a13" d="M1 1h30v30H1z"/><path d="M6 13 27 10v14l-2 3-19-2z" fill="#fff"/><path d="M10 12q0-7 5-7t5 6M13 12q0-7 5-7" fill="none" stroke="#fff" stroke-width="1.500"/><path d="M10 16l4-.5v3h-4zM15 15.500l5-1v4h-5zM10 19.500h4v3.500h-4zM15 19.500h5v4l-5-.5z" fill="#118a13"/></svg></span>
<span class="on"><svg viewBox="0 0 32 32"><circle cx="16" cy="15.500" r="15.500" fill="#62ab3c"/><path d="M10 7l3 12q1 4 5 3t3-6l-2-9M21 7l4 13q1 2 3 1M13 19l3 11" fill="none" stroke="#fff" stroke-width="3.600"/></svg></span>
<span class="on cur"><svg viewBox="0 0 32 32"><path fill="#f8ffff" d="M1 1h30v30H1z"/><path fill="url(#teal)" d="M3 3h26v26H3z"/><path d="M3 21 10 6h3l6 15M7 16h9" stroke="#c9e6e3" stroke-width="3.500" fill="none"/><path d="M23.500 3v16M23.500 25v4M3 22.500h17M26 22.500h4M20.500 19.500h6v6h-6z" stroke="#fff" stroke-width="2" fill="#167a79"/></svg></span>
<span class="on"><svg viewBox="0 0 32 32"><path d="M3 7h17v20H3zM20 7h3v20M24 8h3v19" fill="#c5e3f4" stroke="#5ca7d5" stroke-width="1.700"/><circle cx="12" cy="17" r="9" fill="#ec7425" stroke="#f8d0a5"/><path d="M9 11v12l9-6z" fill="#fff"/></svg></span>
<span class="on"><svg viewBox="0 0 32 32"><path d="M4 11q8-7 17-4 9 5 5 13-4 9-14 8-5-2-1-6-1-3-8 0-5-5 1-11z" fill="#d9ebf5" stroke="#6ea0c1"/><circle cx="8" cy="17" r="2.500" fill="#ce2c2e"/><circle cx="11" cy="11" r="2.500" fill="#65a93a"/><circle cx="18" cy="10" r="2.500" fill="#ef9f26"/><circle cx="15" cy="21" r="2.500" fill="#47879b"/><path d="M26 7 19 30" stroke="#dd7e27" stroke-width="3"/><path d="M23 8q0-5 7-8 2 6-3 10z" fill="#c98c55"/></svg></span>
<span class="on"><svg viewBox="0 0 32 32"><path d="M2 18v4l15 7 13-8v-4z" fill="#245597"/><path d="M2 15v4l15 7 13-8v-4z" fill="#d93227"/><path d="M2 12v4l15 7 13-8v-4z" fill="#f6bf21"/><path d="M2 11 15 3l15 6v3l-14 8-14-7z" fill="#7dae2d"/><path d="M2 11 15 3l15 6-14 8z" fill="#98c943"/></svg></span>
</div>
<div class="tray">
<svg width="112" height="20" viewBox="1135 738 112 20"><path d="M1136 751h7l-3.500-4z" fill="#fff"/><g fill="none" stroke="#fff" stroke-width="1.500"><path d="M1157.500 742v14M1181.500 742v3M1185.500 742v3M1183.500 748v8M1189.500 744.500h5v11h-5zM1190.500 743h3M1209.500 744.500h9v8h-9M1213.500 753v3M1210 756.500h8M1206.500 747v8M1205 742.500h4v4h-4z"/></g><path d="M1159 743h6l3 2v6h-9zM1180 745h7v4h-7zM1191 751h3v4h-3zM1229 746h3l4-4v14l-4-4h-3z" fill="#fff"/><circle cx="1167" cy="752" r="4.500" fill="#db3125"/><path d="M1165 750l4 4M1169 750l-4 4" stroke="#fff" stroke-width="1.300"/><path d="M1238 746q2 3 0 6M1241 744q4 5 0 10" stroke="#dfe8e4" fill="none"/></svg>
<span class="lang">ENG</span><div class="clock"><span>5:46 PM</span><span>9/6/2015</span></div>
</div>
</footer>
</body>
</html>
```
FILE: styles.css
```
* { box-sizing: border-box; margin: 0; padding: 0; }
body { width: 1366px; height: 768px; overflow: hidden; display: flex; flex-direction: column; background: #efefef; font-family: "Noto Sans", "Open Sans", sans-serif; font-size: 12px; color: #000; }
svg { display: block; flex: none; }
.defs { position: absolute; width: 0; height: 0; }

.title { flex: none; height: 23px; display: flex; background: #76beb3; border-bottom: 1px solid #64aa9f; }
.title .app { width: 17px; height: 17px; margin: 3px 0 0 1px; }
.title h1 { flex: 1; padding-left: 384px; font-size: 15px; font-weight: 400; line-height: 23px; color: #24403d; letter-spacing: -0.43px; white-space: nowrap; }
.wbtns { display: flex; }
.close { width: 46px; height: 19px; margin: 0 2px 0 0; background: #c75050; display: flex; align-items: center; justify-content: center; }

.menubar { flex: none; height: 19px; display: flex; background: #f5f6f8; border-bottom: 1px solid #e6e8ea; }
.menubar .doc { width: 17px; height: 17px; margin: 1px 0 0 7px; }
.menubar ul { list-style: none; flex: 1; display: grid; grid-template-columns: 32px 34px 39px 43px 52px 43px 41px 71px 52px 58px 39px 60px; padding-left: 6px; line-height: 19px; letter-spacing: -0.35px; }
.mdi { display: flex; gap: 1px; padding: 1px 1px 0 0; }
.mdi span { width: 18px; height: 18px; border: 1px solid #98a5b8; background: #dfe9f5; display: flex; align-items: center; justify-content: center; }
.mdi svg { width: 9px; height: 9px; }

.tbrow { flex: none; height: 28px; display: flex; }
.tb { height: 28px; display: flex; align-items: center; border-top: 1px solid #fff; border-right: 1px solid #999; border-bottom: 1px solid #999; padding-top: 6px; padding-bottom: 2px; }
.grip { flex: none; width: 6px; height: 24px; border: solid #a0a0a0; border-width: 0 1px; background: linear-gradient(90deg, #fff 0 1px, #efefef 1px 2px, #a0a0a0 2px 3px, #fff 3px 4px); margin: -2px 0 0 3px; }
.ic { width: 17px; height: 17px; margin: 0 3px; }
.dd { width: 14px; height: 17px; }
.dd2 { width: 12px; }
.sep { flex: none; width: 6px; height: 18px; background: linear-gradient(90deg, transparent 2px, #8c8c8c 2px 3px, transparent 3px); }
.std { width: 654px; }
.std .grip { margin-right: 3px; }
.styles { width: 398px; }
.styles .grip { margin: -2px 2px 0 6px; }
.wsp { width: 239px; }
.wsp .grip { margin-right: 4px; }
.props { width: 590px; }
.props .grip { margin-right: 4px; }
.props .sep { width: 7px; }
.model { width: 450px; }
.model .grip { margin: -2px 3px 0 4px; }

.combo { flex: none; height: 22px; border: 1px solid #d4d4d4; background: linear-gradient(#efefef, #efefef) no-repeat 1px 1px / calc(100% - 20px) 18px #fff; display: flex; align-items: center; padding: 0 1px 2px; color: #6d6d6d; font-size: 11px; letter-spacing: -0.3px; }
.combo svg { order: 9; width: 8px; height: 6px; margin: 2px 3px 0 auto; }
.second .combo svg { margin-right: 2px; }
.combo span { padding-left: 3px; }
.w100 { width: 100px; }
.w175 { width: 175px; }
.w175 span { padding-left: 7px; }
.w150 { width: 150px; }
.w158 { width: 158px; }
.w124 { width: 124px; }
.w120 { width: 121px; }
.combo .ind { padding-left: 8px; }
.swatch { width: 10px; height: 10px; border: 1px solid #000; background: #fff; margin: 1px 1px 0 4px; }
.ln { height: 1px; background: #000; margin: 1px 2px 0 2px; }
.l60 { width: 60px; }
.l35 { width: 35px; }

.work { flex: none; height: 545px; display: flex; border-top: 1px solid #f8f8f8; }
.side { display: flex; flex-direction: column; }
.side .ic { flex: none; margin: 0 0 5px 4px; }
.left .ic { margin-left: 3px; }
.hgrip { flex: none; height: 6px; width: 20px; margin: 2px 0 6px 3px; border: solid #a0a0a0; border-width: 0 0 1px; background: linear-gradient(#fff 0 1px, #efefef 1px 2px, #a0a0a0 2px 3px, #efefef 3px 4px, #fff 4px 5px); }
.left { width: 26px; height: 434px; border-right: 1px solid #fff; border-bottom: 1px solid #999; box-shadow: inset -1px 0 #999; }
.view { width: 1312px; border-left: 1px solid #999; border-top: 1px solid #999; display: flex; flex-direction: column; height: 544px; border-bottom: 1px solid #ddd; border-right: 1px solid #e3e3e3; box-shadow: 0 1px #fff; }
.canvas { width: 1311px; height: 527px; background: #000; border-left: 1px solid #555; }
.tabs { height: 15px; display: flex; padding-left: 1px; }
.nb { width: 18px; height: 15px; border-right: 1px solid #999; border-bottom: 1px solid #999; display: flex; align-items: center; justify-content: center; background: #f2f2f2; }
.nb svg { width: 9px; height: 9px; }
.tabset { width: 150px; height: 15px; }
.tabset text { font-family: "Noto Sans", sans-serif; font-size: 11px; fill: #a0a0a0; }
.tabset text:first-of-type { fill: #fff; }
.rightcol { width: 27px; margin-left: 1px; }
.right { height: 391px; width: 26px; border-left: 1px solid #fff; border-right: 1px solid #999; border-bottom: 1px solid #999; }
.right .ic { margin-left: 4px; }
.order { height: 106px; border-top: 1px solid #fff; }

.cmd { flex: none; height: 57px; display: flex; margin-top: 5px; border-top: 1px solid #999; box-shadow: inset 0 1px #666, 0 -4px 0 #f4f4f4; border-bottom: 1px solid #a0a0a0; padding-top: 10px; }
.cmd .grip { height: 40px; width: 8px; margin: -1px 2px 0 6px; }
.cmdbox { width: 1343px; border-left: 1px solid #777; }
.hist { height: 25px; display: flex; background: #fff; border-top: 2px solid #777; border-bottom: 1px solid #999; }
.hist p { flex: 1; padding-left: 1px; font: 13.33px/18px "Liberation Mono", monospace; color: #000028; }
.vs { width: 17px; background: #efefef; }
.vs svg { width: 16px; height: 22px; }
.inp { height: 18px; display: flex; }
.field { width: 1255px; background: #fff; }
.hs { width: 69px; }
.hs svg { width: 69px; height: 18px; }

.status { flex: none; height: 23px; border-top: 1px solid #fff; padding-left: 7px; font-size: 11px; line-height: 26px; letter-spacing: -0.44px; }

.taskbar { flex: none; height: 40px; position: relative; display: flex; color: #fff; }
.wall { position: absolute; inset: 0; width: 1366px; height: 40px; }
.start, .apps, .tray { position: relative; }
.start { width: 50px; padding: 7px 0 0 11px; }
.apps { display: flex; gap: 4px; padding: 1px 0 0 2px; }
.apps span { width: 58px; height: 39px; display: flex; align-items: center; justify-content: center; border: 1px solid transparent; }
.apps svg { width: 31px; height: 31px; }
.apps .on { background: rgba(220, 230, 230, .22); border-color: rgba(225, 240, 235, .5); }
.apps .cur { background: rgba(225, 235, 235, .42); border-color: #f0f5f4; }
.tray { margin-left: auto; width: 231px; display: flex; align-items: center; }
.lang { padding-left: 11px; letter-spacing: -0.4px; }
.clock { width: 86px; display: flex; flex-direction: column; align-items: center; line-height: 17px; padding-top: 2px; letter-spacing: -0.3px; }
```
